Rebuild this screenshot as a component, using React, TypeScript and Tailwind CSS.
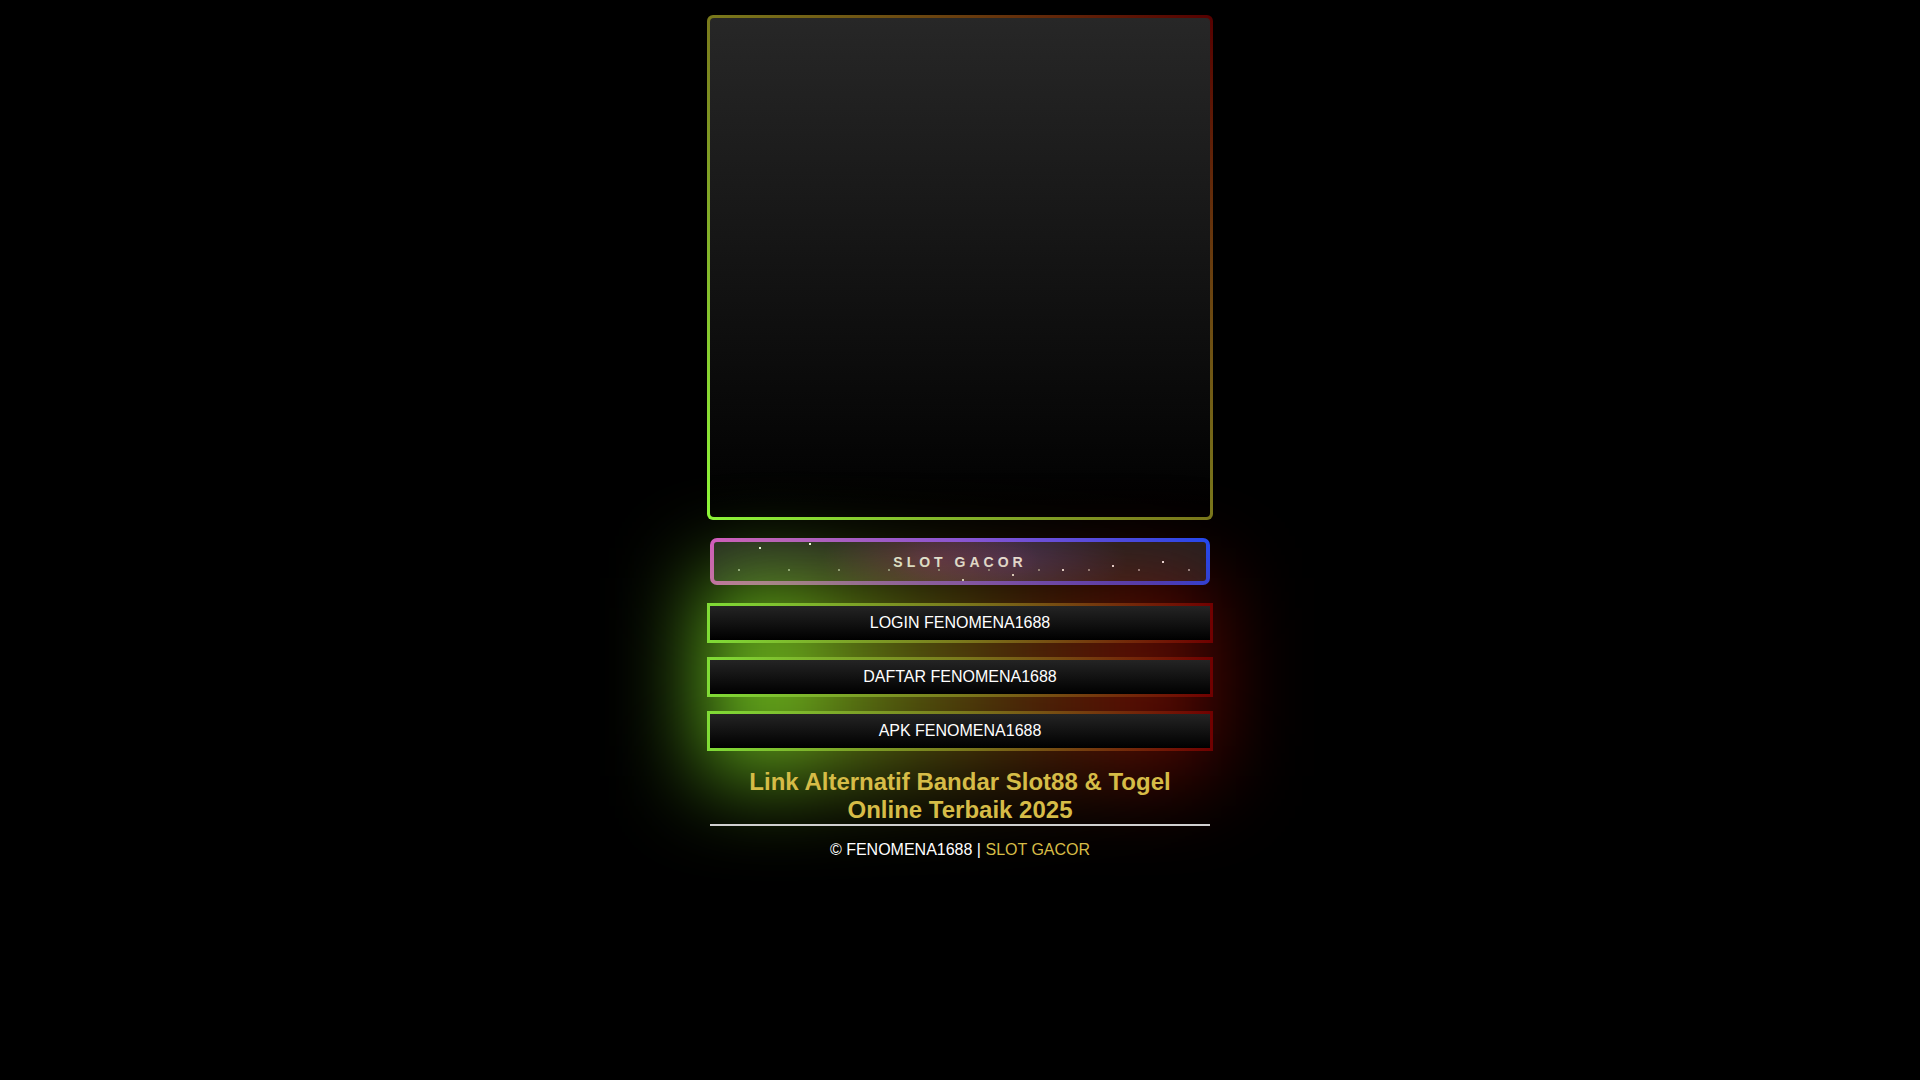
const greyDots = [0, 1, 2, 3, 4, 5, 6, 7, 8, 9];

const stars = [
  { x: 45, y: 5 },
  { x: 95, y: 1 },
  { x: 248, y: 37 },
  { x: 298, y: 32 },
  { x: 348, y: 27 },
  { x: 398, y: 23 },
  { x: 448, y: 19 },
];

const links = ["LOGIN FENOMENA1688", "DAFTAR FENOMENA1688", "APK FENOMENA1688"];

export default function App() {
  return (
    <main className="min-h-screen bg-black font-['Liberation_Sans',Arial,sans-serif] text-white">
      <div className="mx-auto flex w-[506px] flex-col pt-[15px]">
        {/* banner card */}
        <div className="h-[505px] rounded-[6px] bg-[linear-gradient(to_top_right,#8ef83a,#7a7a1c_50%,#560000)] p-[3px]">
          <div className="h-full rounded-[4px] bg-[linear-gradient(to_bottom,#272727,#000)]" />
        </div>

        {/* slot gacor strip */}
        <div className="mx-[3px] mt-[18px] h-[47px] rounded-[7px] bg-[linear-gradient(90deg,#d84fc9,#8e55ee_50%,#1c4dff)] p-[4px]">
          <div className="relative flex h-full items-center justify-center overflow-hidden rounded-[3px] bg-[#222] bg-[radial-gradient(ellipse_22%_130%_at_44%_50%,rgba(150,45,110,0.45),transparent),radial-gradient(ellipse_24%_130%_at_60%_50%,rgba(105,65,175,0.4),transparent)]">
            {greyDots.map((i) => (
              <span
                key={i}
                className="absolute top-[27px] h-[1.5px] w-[1.5px] bg-[#9a9a9a]"
                style={{ left: 24 + i * 50 }}
              />
            ))}
            {stars.map((s, i) => (
              <span
                key={i}
                className="absolute h-[2px] w-[2px] bg-white"
                style={{ left: s.x, top: s.y }}
              />
            ))}
            <span className="relative pt-[2px] text-[14px] font-bold tracking-[4px] text-white">
              SLOT GACOR
            </span>
          </div>
        </div>

        {/* link buttons */}
        <div className="relative mt-[18px]">
          <div className="absolute inset-x-0 -inset-y-[25px] bg-[linear-gradient(90deg,rgba(130,245,40,0.9),rgba(115,130,20,0.7)_35%,rgba(125,55,10,0.6)_65%,rgba(150,0,0,0.65))] blur-[45px]" />
          <div className="relative flex flex-col gap-[14px]">
            {links.map((label) => (
              <a
                key={label}
                href="#"
                className="block h-[40px] bg-[linear-gradient(90deg,#80dc36,#7a7a1c_50%,#700000)] p-[3px]"
              >
                <span className="flex h-full items-center justify-center bg-[linear-gradient(to_bottom,#242424,#000)] text-[16px] text-white">
                  {label}
                </span>
              </a>
            ))}
          </div>
        </div>

        <h1 className="relative mx-[3px] mt-[17px] text-center text-[24px] font-bold leading-[28px] text-[#d6bc47]">
          Link Alternatif Bandar Slot88 &amp; Togel Online Terbaik 2025
        </h1>
        <hr className="relative mx-[3px] border-0 border-t-2 border-[#d0d0d0]" />

        <footer className="relative mt-[12px] text-center text-[16px] text-white">
          © FENOMENA1688 | <a href="#" className="text-[#d6bc47]">SLOT GACOR</a>
        </footer>
      </div>
    </main>
  );
}
